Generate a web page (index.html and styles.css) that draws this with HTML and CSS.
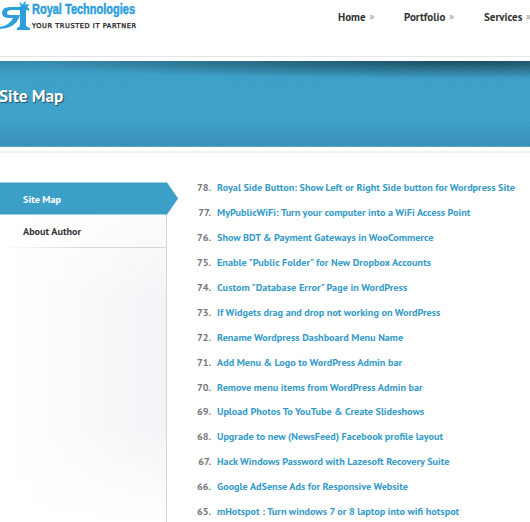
FILE: index.html
```html
<!DOCTYPE html>
<html lang="en">
<head>
<meta charset="utf-8">
<title>Site Map</title>
<link rel="stylesheet" href="styles.css">
</head>
<body>
<header class="header">
  <svg class="logo" width="140" height="34" viewBox="0 0 140 34" role="img" aria-label="Royal Technologies">
    <g fill="#2d9fdc">
      <path d="M2 13Q2 7 10 7H21V10H12Q7 10 7 13Q7 15 11 15H20L19 18Q15 28 0 29V27Q10 25 13 18H9Q2 18 2 13Z"/>
      <path d="M20 9H26V25Q26 27 30 28V30H17V28Q20 27 20 25Z"/>
      <path d="M18 10Q18 7 21 6Q19 4 20 2L23 5Q23 2 26 1L25 5Q28 3 29 5L27 7Q30 8 29 11Q27 9 24 11Z"/>
    </g>
    <text class="logo-name" x="32" y="14.300" textLength="103" lengthAdjust="spacingAndGlyphs">Royal Technologies</text>
    <text class="logo-tag" x="32" y="28" textLength="104" lengthAdjust="spacing">YOUR TRUSTED IT PARTNER</text>
  </svg>
  <nav class="nav">
    <a class="nav-home">Home <i>»</i></a>
    <a class="nav-portfolio">Portfolio <i>»</i></a>
    <a class="nav-services">Services <i>»</i></a>
  </nav>
</header>
<section class="banner"><h1>Site Map</h1></section>
<main class="content">
  <aside class="sidebar">
    <a class="side-item active">Site Map</a>
    <a class="side-item">About Author</a>
  </aside>
  <ol class="posts" reversed start="78">
    <li><b>78.</b><a>Royal Side Button: Show Left or Right Side button for Wordpress Site</a></li>
    <li><b>77.</b><a>MyPublicWiFi: Turn your computer into a WiFi Access Point</a></li>
    <li><b>76.</b><a>Show BDT &amp; Payment Gateways in WooCommerce</a></li>
    <li><b>75.</b><a class="quoted">Enable "Public Folder" for New Dropbox Accounts</a></li>
    <li><b>74.</b><a class="quoted">Custom "Database Error" Page in WordPress</a></li>
    <li><b>73.</b><a>If Widgets drag and drop not working on WordPress</a></li>
    <li><b>72.</b><a>Rename Wordpress Dashboard Menu Name</a></li>
    <li><b>71.</b><a>Add Menu &amp; Logo to WordPress Admin bar</a></li>
    <li><b>70.</b><a>Remove menu items from WordPress Admin bar</a></li>
    <li><b>69.</b><a>Upload Photos To YouTube &amp; Create Slideshows</a></li>
    <li><b>68.</b><a>Upgrade to new (NewsFeed) Facebook profile layout</a></li>
    <li><b>67.</b><a>Hack Windows Password with Lazesoft Recovery Suite</a></li>
    <li><b>66.</b><a>Google AdSense Ads for Responsive Website</a></li>
    <li><b>65.</b><a>mHotspot : Turn windows 7 or 8 laptop into wifi hotspot</a></li>
  </ol>
</main>
</body>
</html>
```
FILE: styles.css
```css
* { box-sizing: border-box; }
body {
  margin: 0;
  height: 522px;
  overflow: hidden;
  background: #fff;
  font: bold 10.18px/25px "PT Sans", "Noto Sans", sans-serif;
  color: #333;
}
.header {
  display: flex;
  height: 57px;
  border-bottom: 1px solid #e6e6e6;
}
.logo { flex: none; }
.logo-name { font: bold 14.5px "Liberation Sans Narrow", "Liberation Sans", sans-serif; fill: #2d9fdc; stroke: #2d9fdc; stroke-width: .5px; }
.logo-tag { font: 6.6px "DejaVu Sans", sans-serif; fill: #222; stroke: #222; stroke-width: .3px; }
.nav { display: flex; padding: 5px 0 0 198px; font-size: 11px; white-space: nowrap; }
.nav a { flex: none; }
.nav i { margin-left: 1px; font: normal 10px/20px "Noto Sans", sans-serif; color: #999; vertical-align: 1px; }
.nav-home { width: 66px; }
.nav-portfolio { width: 80px; }
.banner {
  height: 86px;
  margin-top: 4px;
  padding-top: 23px;
  border-bottom: 1px solid #58a9c8;
  background:
    radial-gradient(ellipse 430px 18px at 460px 0, rgba(12,42,57,.62), transparent),
    repeating-linear-gradient(45deg, rgba(255,255,255,.02) 0 2px, transparent 2px 4px),
    linear-gradient(#358bac, #3c9fc7 18%, #3ea1c9 68%, #378fb6);
}
.banner h1 { margin: 0 0 0 -1px; font-size: 17.2px; line-height: 24px; color: #fff; text-shadow: 1px 1px 1px rgba(0,0,0,.5); }
.content { display: flex; margin-top: 4px; padding-top: 22px; border-top: 2px solid #f1f1f1; }
.sidebar {
  flex: none;
  width: 167px;
  height: 340px;
  margin-top: 7px;
  border-right: 1px solid #d5d5d5;
  background: linear-gradient(rgba(255,255,255,1), rgba(255,255,255,0) 35%, rgba(255,255,255,0) 72%, #fff), linear-gradient(90deg, #fff 8%, #f3f4f7);
}
.side-item {
  display: block;
  height: 33px;
  padding-left: 23px;
  line-height: 34px;
  background: linear-gradient(90deg, #fff, #d8d8d8 50%) bottom / 100% 1px no-repeat;
}
.side-item.active {
  width: 178px;
  line-height: 35px;
  color: #fff;
  background: #3c9fc7;
  clip-path: polygon(0 .5px, 167px .5px, 100% 50%, 167px 32.5px, 0 32.5px);
}
.posts { margin: 0; padding: 0 0 0 28px; list-style: none; }
.posts li { display: flex; height: 24.95px; white-space: nowrap; }
.posts b { width: 16px; margin-right: 6px; color: #777; display: flex; justify-content: flex-end; }
.posts a { color: #359bc8; }
.posts .quoted { letter-spacing: .05px; }
```
